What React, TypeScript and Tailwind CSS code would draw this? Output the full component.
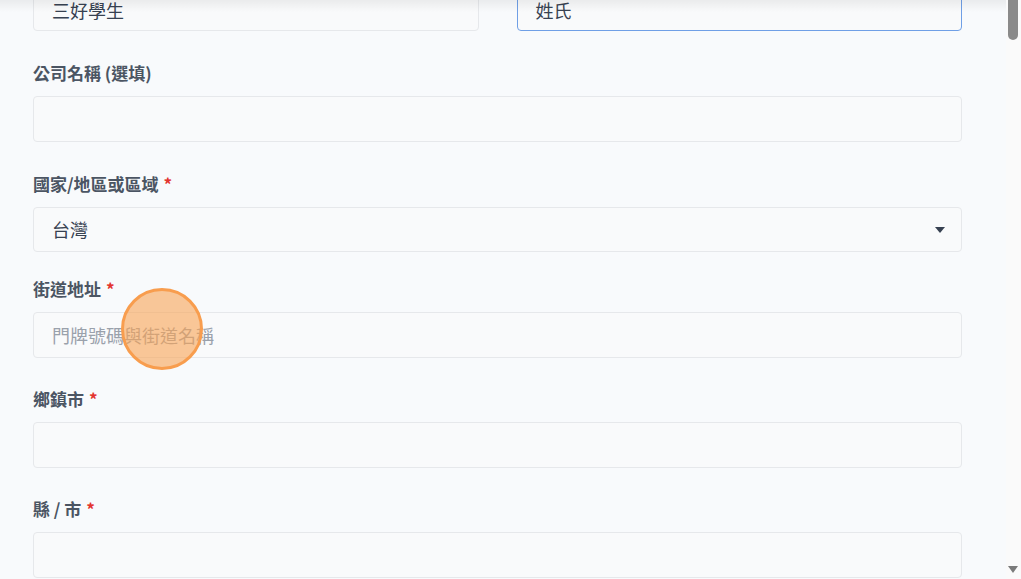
import React from "react";

const font = { fontFamily: '"Noto Sans CJK TC", "Noto Sans", "Liberation Sans", sans-serif' };

function Label({ text, required }: { text: string; required?: boolean }) {
  return (
    <div className="h-6 leading-6 text-[17px] font-semibold text-[#4b5563] mb-[11px]">
      {text}
      {required && <span className="text-[#e3342f] ml-[5px]">*</span>}
    </div>
  );
}

function Input({ value, placeholder, focus, top }: { value?: string; placeholder?: string; focus?: boolean; top?: boolean }) {
  return (
    <div
      className={
        "h-[46px] rounded-[4px] border bg-[#f9fafb] flex items-center px-[18px] text-[18px] " +
        (focus ? "border-[#6f9fe6]" : "border-[#e6e8eb]") +
        (top ? " pt-[5px]" : "")
      }
    >
      {value ? (
        <span className="text-[#374151]">{value}</span>
      ) : placeholder ? (
        <span className="text-[#9aa1ab]">{placeholder}</span>
      ) : null}
    </div>
  );
}

export default function App() {
  return (
    <div className="relative w-[1021px] h-[579px] overflow-hidden bg-[#f8fafc] flex" style={font}>
      <div className="flex-1 pl-[33px]">
        <div className="w-[929px] mt-[-15px]">
          <div className="grid grid-cols-2 gap-[38px]">
            <Input value="三好學生" top />
            <Input value="姓氏" focus top />
          </div>
          <div className="mt-[30px]">
            <Label text="公司名稱 (選填)" />
            <Input />
          </div>
          <div className="mt-[30px]">
            <Label text="國家/地區或區域" required />
            <div className="h-[45px] rounded-[4px] border border-[#e6e8eb] bg-[#f9fafb] flex items-center justify-between pl-[18px] pr-[16px] text-[18px]">
              <span className="text-[#374151]">台灣</span>
              <svg width="10" height="6" viewBox="0 0 10 6">
                <path d="M0 0 L10 0 L5 6 Z" fill="#374151" />
              </svg>
            </div>
          </div>
          <div className="mt-[25px]">
            <Label text="街道地址" required />
            <Input placeholder="門牌號碼與街道名稱" />
          </div>
          <div className="mt-[29px]">
            <Label text="鄉鎮市" required />
            <Input />
          </div>
          <div className="mt-[29px]">
            <Label text="縣 / 市" required />
            <Input />
          </div>
        </div>
      </div>
      <div className="w-[15px] h-full bg-[#fafafa] relative">
        <div className="absolute left-[2px] top-0 w-[10px] h-[40px] rounded-b-[5px] bg-[#8a8a8a]" />
        <svg className="absolute left-[2px] bottom-[6px]" width="10" height="7" viewBox="0 0 10 7">
          <path d="M0 0 L10 0 L5 7 Z" fill="#7a7a7a" />
        </svg>
      </div>
      <div className="pointer-events-none absolute top-0 left-0 right-[15px] h-[12px] bg-gradient-to-b from-black/[0.06] to-transparent" />
      <div className="pointer-events-none absolute left-[121px] top-[288px] w-[82px] h-[82px] rounded-full border-[3px] border-[#f89d4e] bg-[#f8a455]/60" />
    </div>
  );
}
